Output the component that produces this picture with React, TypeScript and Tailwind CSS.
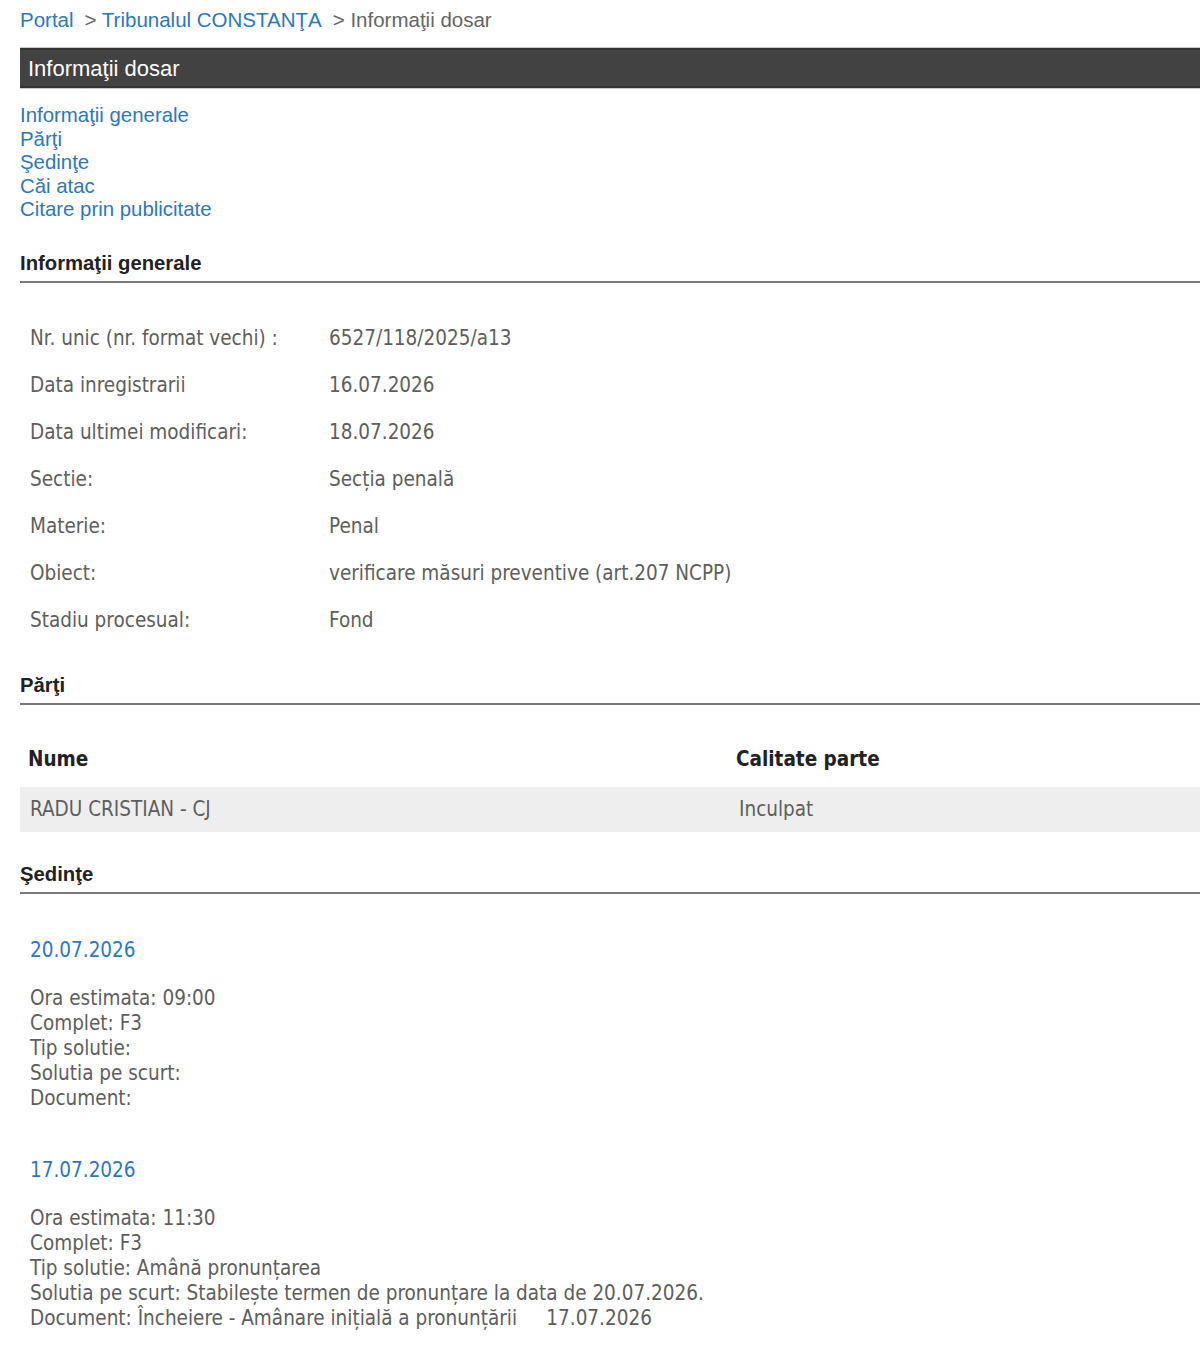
const arial = { fontFamily: '"Liberation Sans", Arial, sans-serif' };

interface Rand {
  eticheta: string;
  valoare: string;
}

interface Sedinta {
  data: string;
  ora: string;
  complet: string;
  tipSolutie: string;
  solutie: string;
  document: string;
}

const informatii: Rand[] = [
  { eticheta: "Nr. unic (nr. format vechi) :", valoare: "6527/118/2025/a13" },
  { eticheta: "Data inregistrarii", valoare: "16.07.2026" },
  { eticheta: "Data ultimei modificari:", valoare: "18.07.2026" },
  { eticheta: "Sectie:", valoare: "Secția penală" },
  { eticheta: "Materie:", valoare: "Penal" },
  { eticheta: "Obiect:", valoare: "verificare măsuri preventive (art.207 NCPP)" },
  { eticheta: "Stadiu procesual:", valoare: "Fond" },
];

const sedinte: Sedinta[] = [
  { data: "20.07.2026", ora: "09:00", complet: "F3", tipSolutie: "", solutie: "", document: "" },
  {
    data: "17.07.2026",
    ora: "11:30",
    complet: "F3",
    tipSolutie: "Amână pronunțarea",
    solutie: "Stabilește termen de pronunțare la data de 20.07.2026.",
    document: "Încheiere - Amânare inițială a pronunțării\u00a0\u00a0\u00a0\u00a0 17.07.2026",
  },
];

// titlu de sectiune cu linia gri dedesubt
function Titlu({ text, className }: { text: string; className?: string }) {
  return (
    <div className={"border-b-2 border-[#7a7a7a] pb-[6px] " + (className ?? "")}>
      <h3 className="text-[20.3px] leading-[24px] font-bold text-[#222]" style={arial}>
        {text}
      </h3>
    </div>
  );
}

export default function App() {
  return (
    <div
      className="min-h-[1355px] bg-white pl-5 pt-[7px] text-[#5e5e5e]"
      style={{ fontFamily: '"DejaVu Sans Condensed", "DejaVu Sans", sans-serif' }}
    >
      {/* breadcrumb */}
      <div className="text-[20.5px] leading-[26px] text-[#666]" style={arial}>
        <a className="text-[#2b78c2]">Portal</a>
        <span className="ml-[11px]">&gt; </span>
        <a className="text-[#2b78c2]">Tribunalul CONSTANŢA</a>
        <span className="ml-[11px]">&gt; Informaţii dosar</span>
      </div>

      <div className="mt-[15px] h-[40px] flex items-center bg-[#424242] border-y-2 border-[#333] shadow-[0_-1px_0_#c8c8c8,0_1px_0_#c8c8c8] pl-2">
        <h2 className="text-[22px] text-white" style={arial}>
          Informaţii dosar
        </h2>
      </div>

      <div className="mt-[16px] flex flex-col text-[20.4px] leading-[23.5px] text-[#2b78c2]" style={arial}>
        <a>Informaţii generale</a>
        <a>Părţi</a>
        <a>Şedinţe</a>
        <a>Căi atac</a>
        <a>Citare prin publicitate</a>
      </div>

      <Titlu text="Informaţii generale" className="mt-[29px]" />

      <table className="mt-[32px] text-[20.5px]">
        <tbody>
          {informatii.map((r) => (
            <tr key={r.eticheta} className="h-[47px]">
              <td className="w-[309px] pl-[10px] align-middle">{r.eticheta}</td>
              <td className="align-middle">{r.valoare}</td>
            </tr>
          ))}
        </tbody>
      </table>

      <Titlu text="Părţi" className="mt-[29px]" />

      <div className="mt-[32px] text-[20.5px]">
        <div className="flex h-[46px] items-center font-bold text-[#222]">
          <div className="w-[716px] pl-2">Nume</div>
          <div>Calitate parte</div>
        </div>
        <div className="mt-[4px] flex h-[45px] items-center bg-[#eeeeee]">
          <div className="w-[719px] pl-[10px]">RADU CRISTIAN - CJ</div>
          <div>Inculpat</div>
        </div>
      </div>

      <Titlu text="Şedinţe" className="mt-[30px]" />

      <div className="pl-[10px] text-[20.5px]">
        {sedinte.map((s, i) => (
          <div key={s.data} className={i === 0 ? "mt-[44px]" : "mt-[47px]"}>
            <div className="leading-[24px] text-[#2b78c2]">{s.data}</div>
            <div className="mt-[24px] flex flex-col leading-[25px]">
              <span>Ora estimata: {s.ora}</span>
              <span>Complet: {s.complet}</span>
              <span>Tip solutie: {s.tipSolutie}</span>
              <span>Solutia pe scurt: {s.solutie}</span>
              <span>Document: {s.document}</span>
            </div>
          </div>
        ))}
      </div>
    </div>
  );
}
